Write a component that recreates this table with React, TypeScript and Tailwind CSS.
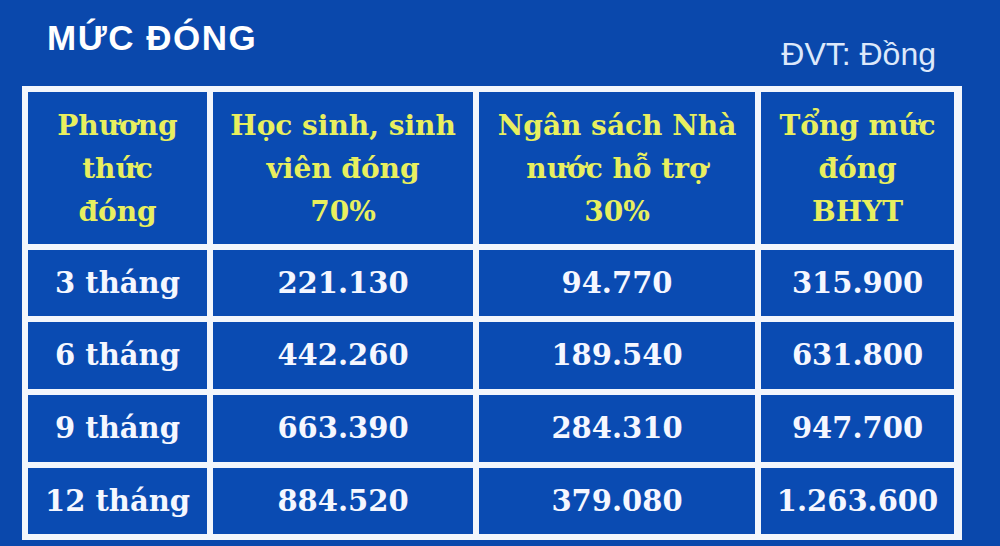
import React from 'react';

const rows = [
  ['3 tháng', '221.130', '94.770', '315.900'],
  ['6 tháng', '442.260', '189.540', '631.800'],
  ['9 tháng', '663.390', '284.310', '947.700'],
  ['12 tháng', '884.520', '379.080', '1.263.600'],
];

const headers = [
  ['Phương', 'thức', 'đóng'],
  ['Học sinh, sinh', 'viên đóng', '70%'],
  ['Ngân sách Nhà', 'nước hỗ trợ', '30%'],
  ['Tổng mức', 'đóng', 'BHYT'],
];

const serif = "font-['DejaVu_Serif','Liberation_Serif',serif] font-bold";

export default function App() {
  return (
    <div className="w-[1000px] h-[546px] bg-[#0a48ac] overflow-hidden">
      {/* tiêu đề */}
      <div className="flex h-[86px] font-['Liberation_Sans',Arial,sans-serif]">
        <h1 className="pl-[47px] pt-[20px] text-[35px] tracking-[1.5px] leading-none font-bold text-white">MỨC ĐÓNG</h1>
        <p className="ml-auto pr-[64px] pt-[38px] text-[32px] leading-none text-[#dce8fb]">ĐVT: Đồng</p>
      </div>

      {/* bảng mức đóng */}
      <div className="ml-[22px] w-[940px] grid grid-cols-[179px_260px_276px_193px] grid-rows-[152px_66px_67px_67px_66px] gap-[6px] p-[6px] bg-[#f3f6fc]">
        {headers.map((lines, i) => (
          <div
            key={i}
            className={`bg-[#0a4bb2] flex flex-col items-center justify-center text-center text-[28px] leading-[43px] text-[#e8ef5f] ${serif}`}
          >
            {lines.map((l) => (
              <span key={l}>{l}</span>
            ))}
          </div>
        ))}
        {rows.map((r) =>
          r.map((cell, j) => (
            <div
              key={r[0] + j}
              className={`bg-[#0a4bb2] flex items-center justify-center text-[29px] leading-none text-[#f5f7ff] ${serif}`}
            >
              {cell}
            </div>
          ))
        )}
      </div>
    </div>
  );
}
